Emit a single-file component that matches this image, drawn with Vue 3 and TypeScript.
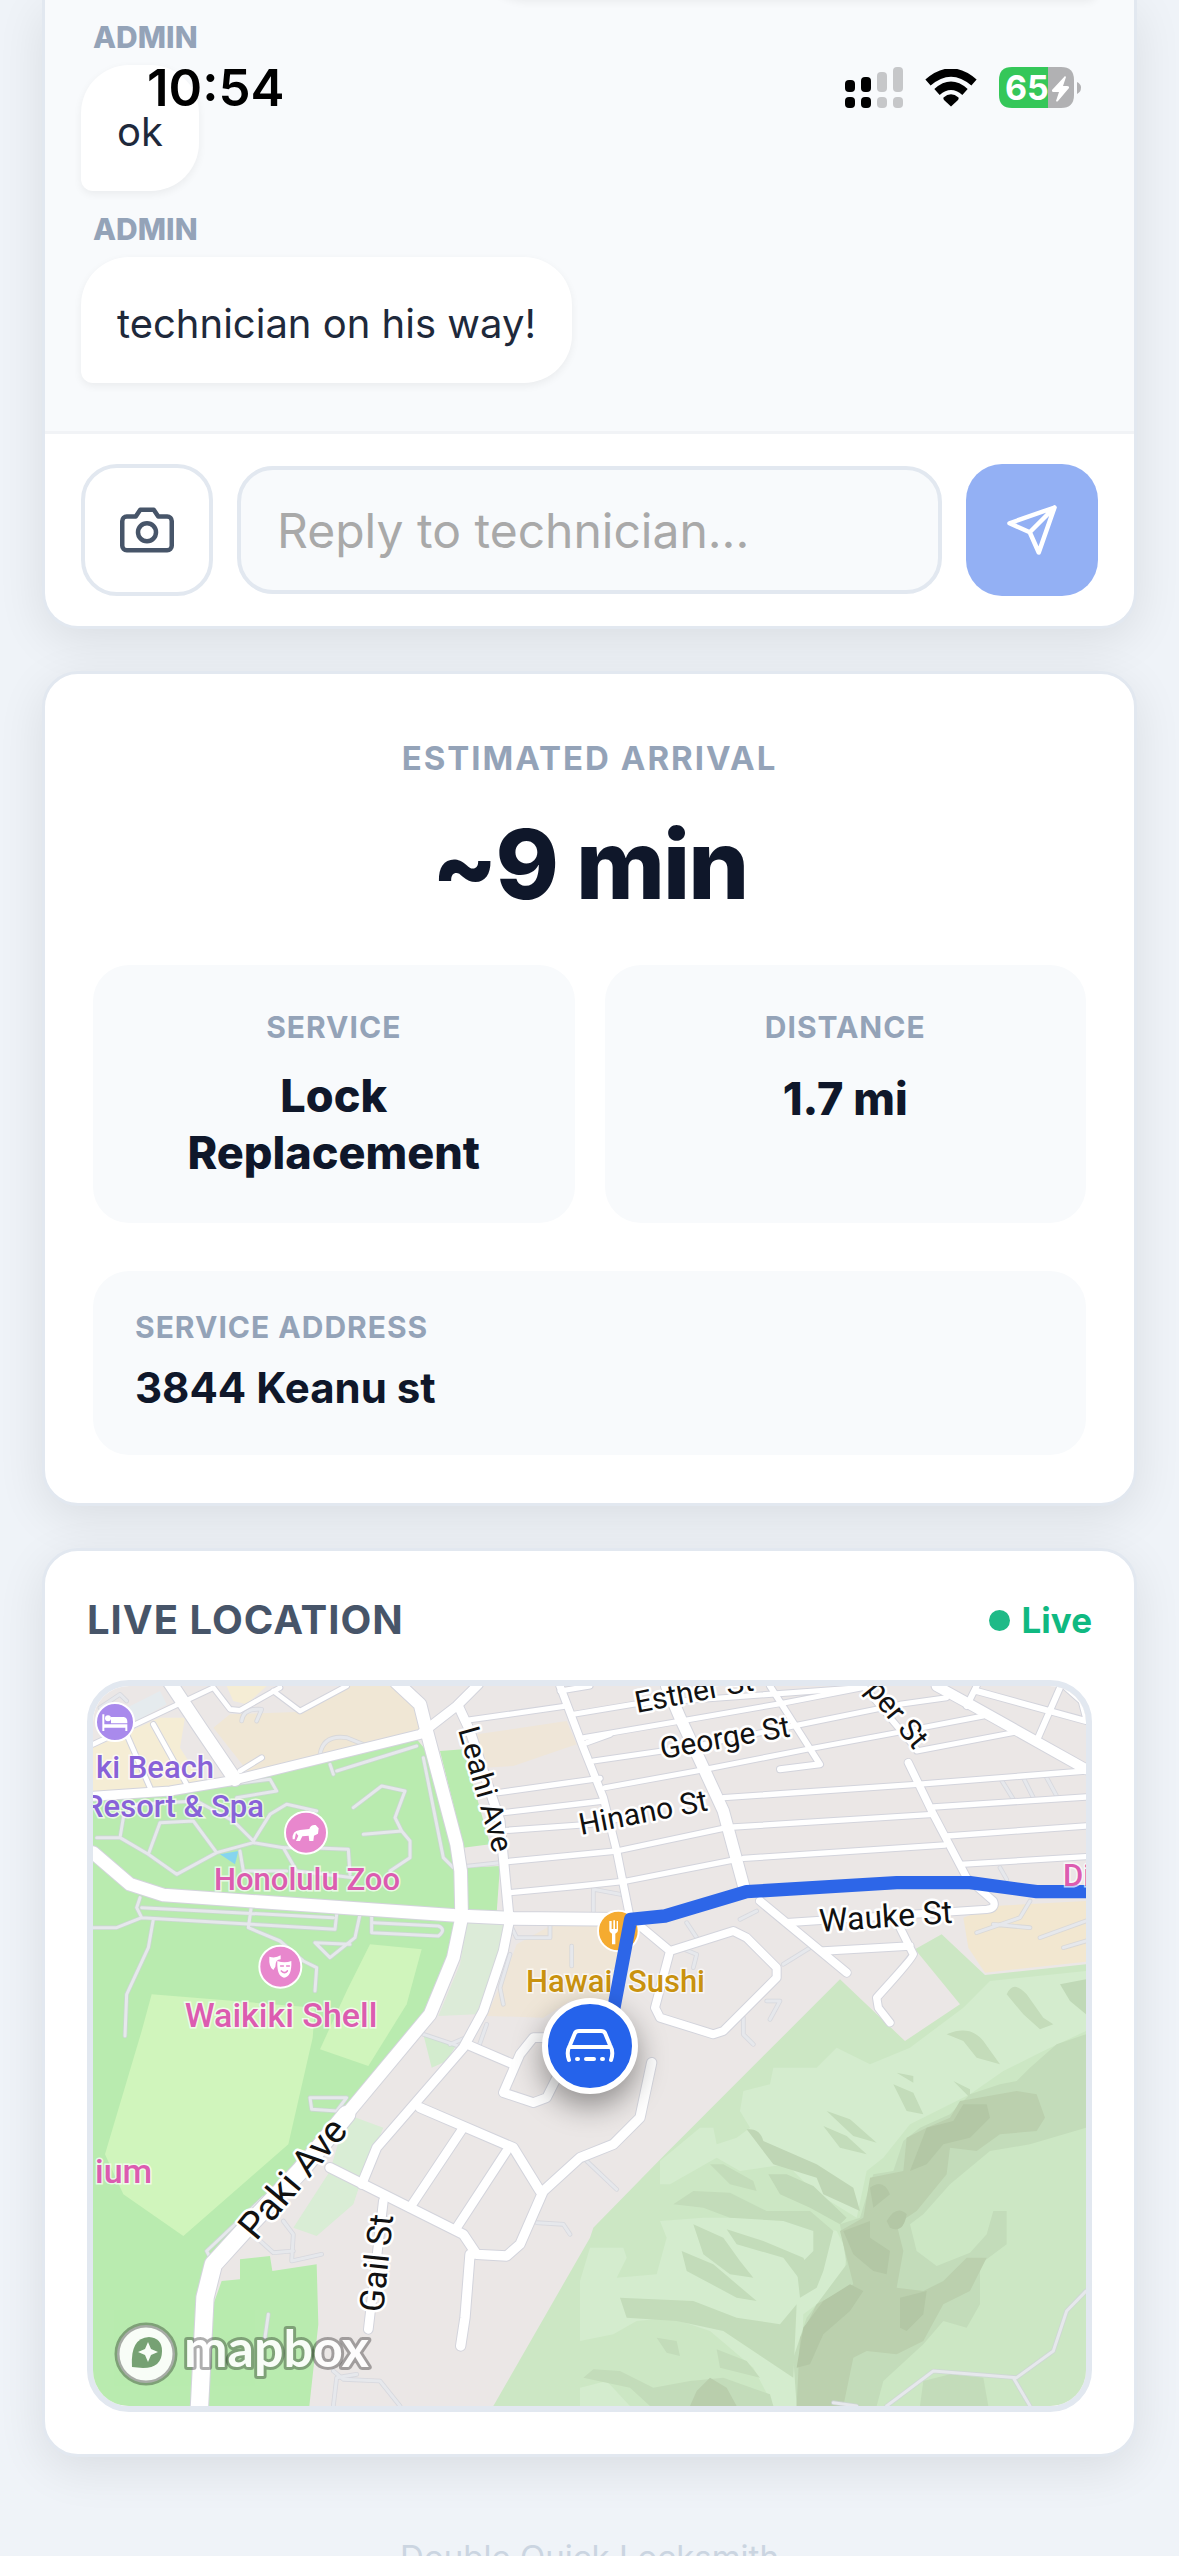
<script setup lang="ts">
import { ref } from 'vue'

interface Message { id: number; author: string; text: string }
interface Road { d: string; w: number }
interface Shape { d: string; fill: string }
interface Label { text: string; x: number; y: number; angle: number; size: number }

const reply = ref('')

const messages: Message[] = [
  { id: 1, author: 'Admin', text: 'ok' },
  { id: 2, author: 'Admin', text: 'technician on his way!' },
]

const areas: Shape[] = [
  // park west of Paki Ave
  { d: 'M69 385 300 370 600 310 1040 205 1070 240 1160 560 1175 740 1130 900 1080 1020 830 1330 690 1500 420 1770 390 1900 380 2205H69z', fill: '#b9ebaf' },
  { d: 'M455 1830 510 1825V1765L600 1755 607 1800 740 1780 745 1960 718 2205H400L430 1900z', fill: '#b9ebaf' },
  { d: 'M1110 240 1180 235 1260 520 1180 530 1150 400z', fill: '#b9ebaf' },
  { d: 'M1190 590 1290 585 1280 725 1190 720z', fill: '#b9ebaf' },
  { d: 'M1190 755 1315 755 1220 1030 1105 1035 1170 880z', fill: '#dcebd8' },
  { d: 'M1060 1090 1160 1120 1130 1170 1085 1190z', fill: '#d3ecce' },
  { d: 'M830 1330 940 1370 880 1510 850 1600 740 1695 670 1670 780 1500z', fill: '#d9edd5' },
  { d: 'M245 970 735 1010 728 1100 655 1420 340 1695 160 1570 105 1450 215 1080z', fill: '#d0f5bc' },
  { d: 'M900 820 1055 835 1010 1000 895 1185 750 1135 830 960z', fill: '#d0f5bc' },
  // commercial blocks
  { d: 'M480 130 700 122 830 45H960L1040 110 1050 180 540 310 430 170z', fill: '#f0e7d5' },
  { d: 'M69 230 270 140H345L330 230 400 340 69 362z', fill: '#f5edd5' },
  { d: 'M470 45H590L530 100 490 90z', fill: '#f5edd5' },
  { d: 'M170 110 270 60 290 100 200 150z', fill: '#e5ebee' },
  { d: 'M1220 190 1490 150 1520 220 1330 285 1245 290z', fill: '#efe6d8' },
  { d: 'M1340 820 1450 760 1680 770 1640 1000 1500 990 1420 1040 1250 1035 1310 900z', fill: '#efe6d8' },
  { d: 'M2680 740 2770 705 3048 690V872L2745 905 2695 830z', fill: '#f2e7d0' },
  { d: 'M450 550 505 540 495 580z', fill: '#86d5ef' },
  // Diamond Head slopes
  { d: 'M1270 2205 1560 1700 1570 1670 1790 1445 2155 1080 2310 925 2505 1110 2670 1000 2535 835 2615 790 2745 912 3048 880V2205z', fill: '#cce7c4' },
]

const relief: Shape[] = [
  { d: 'M2110 1190 2240 1190 2300 1130 2400 1180 2520 1130 2680 1010 2760 930 3048 900V1080L2920 1140 2800 1200 2700 1270 2600 1320 2520 1360 2440 1460 2390 1500 2360 1640 2230 1560 2150 1480 2010 1500 1940 1460 1800 1540 1770 1540 1770 1470 1890 1370 1930 1370 1940 1420 2000 1400 2040 1370 2010 1320 2020 1260 2100 1240z', fill: '#d4ecce' },
  { d: 'M1560 1730H1660L1670 1760 1640 1820 1760 1810 1790 1700 1770 1650 1900 1640 2100 1640 2220 1660 2300 1680 2330 1740 2320 1840 2200 1930 2190 2205H2110L2050 2090 1920 1980 1800 1940 1700 1950 1630 1990 1530 2010V1830z', fill: '#d4ecce' },
  { d: 'M1530 2150 1610 2130 1680 2205H1530z', fill: '#d4ecce' },
  { d: 'M2630 1090Q2700 1060 2740 1110L2790 1180 2720 1160 2680 1110z', fill: '#c4dcba' },
  { d: 'M2810 970Q2830 925 2870 970L2920 1040 2950 1060 2910 1075 2860 1030z', fill: '#c4dcba' },
  { d: 'M2970 940 3048 925V1030L3000 990z', fill: '#c0d9b7' },
  { d: 'M3048 1090 2960 1120 2880 1190 2840 1230 2790 1240 2700 1270 2640 1330 2550 1370 2500 1410 2470 1500 2410 1510 2370 1640 2310 1660 2330 1780 2210 1940 2170 2060 2180 2205H2420L2440 2130 2560 2020 2620 1950 2690 1970 2730 1900 2730 1780 2810 1720 2810 1620H2770L2750 1690 2700 1745 2600 1785 2540 1740 2520 1660 2560 1630 2640 1540 2760 1440 2880 1420 3048 1370z', fill: '#c3dcba' },
  { d: 'M2670 1290 2840 1260 2900 1270 2925 1340 2900 1380 2790 1390 2720 1440 2640 1430 2630 1510 2540 1620 2480 1660 2500 1740 2480 1850 2560 1860 2620 1830 2690 1760 2750 1760 2700 1860 2620 1900 2560 2010 2480 2050 2390 2040 2350 2060 2320 2205H2180L2190 2000 2240 1900 2350 1840 2310 1680 2380 1640 2400 1520 2500 1500 2510 1400 2570 1370 2640 1340z', fill: '#bbd0ae' },
  { d: 'M2680 1300 2750 1300 2760 1340 2700 1400 2620 1420 2570 1480 2520 1500 2570 1370 2650 1350z', fill: '#b3c7a5' },
  { d: 'M2320 1680 2400 1650 2400 1700 2460 1740 2450 1810 2410 1800 2350 1750z', fill: '#b3c7a5' },
  { d: 'M2260 1890 2340 1840 2380 1860 2340 1920 2260 1990 2220 2080 2180 2090 2200 1970z', fill: '#b3c7a5' },
  { d: 'M2490 1880 2570 1860 2560 1930 2510 1980 2490 1970z', fill: '#b3c7a5' },
  { d: 'M2400 1550Q2440 1520 2460 1570L2410 1610zM2450 1650Q2480 1600 2510 1630 2500 1690 2460 1670z', fill: '#b3c7a5' },
  { d: 'M2030 1375Q2070 1370 2080 1410L2240 1480 2350 1550 2370 1620 2260 1570 2240 1520 2110 1480z', fill: '#bfd6b5' },
  { d: 'M1920 1480 1960 1480 2050 1530 2060 1560 1980 1540z', fill: '#c3dcba' },
  { d: 'M2095 1510 2150 1510 2230 1545 2330 1640 2310 1660 2220 1610 2130 1570z', fill: '#c0d9b7' },
  { d: 'M1810 1600 1870 1560 1980 1565 2090 1620 2220 1620 2290 1680 2260 1800 2240 1850 2190 1880 2180 1790 2230 1740 2230 1680 2140 1650 1980 1640 1900 1610z', fill: '#c3dcba' },
  { d: 'M1870 1660 1960 1700 2010 1770 2050 1820 1980 1810 1900 1750zM1970 1675 2080 1710 2200 1760 2230 1820 2200 1840 2140 1760 2000 1720zM1835 1740 1930 1780 2060 1890 2000 1880 1850 1800z', fill: '#c3dcba' },
  { d: 'M1650 1880 1870 1890 2000 1940 2130 1960 2180 1900 2170 2120 2080 2060 1960 1980 1820 1950 1670 1940z', fill: '#c3dcba' },
  { d: 'M2270 1320 2340 1345 2420 1415 2350 1395zM2260 1365 2330 1395 2390 1450 2310 1430zM2470 1240 2530 1265 2560 1330 2510 1320zM2480 1205 2530 1215 2530 1235zM2650 1230 2700 1255 2700 1280z', fill: '#c3dcba' },
  { d: 'M1760 2000 1820 2010 1830 2055 1790 2045zM1940 2035 2030 2070 2070 2120 1950 2090zM1540 2120 1570 2095 1650 2100 1750 2150 1860 2130 1960 2120 2100 2170 2110 2205H1740L1680 2150z', fill: '#c3dcba' },
  { d: 'M1880 2160 1920 2120 1970 2150 2000 2205H1860z', fill: '#b9ceac' },
  { d: 'M2560 2130 2640 2110 2740 2120 2755 2205H2550z', fill: '#c3dcba' },
]

const paths: string[] = [
  'M80 500H150L235 550 320 610 440 545 370 450 270 455 235 550M150 500 160 440 200 400 380 390 490 450 550 510 600 430 650 400 740 420M440 545 550 515 640 530 720 530 835 535 840 610M640 530 680 600 850 620M510 540 520 600 650 600',
  'M850 410 935 345 1005 360 990 400 975 440 995 480 1020 510 1020 560 960 600M880 490 995 480M800 300 1040 225M790 310 780 280M480 340 600 325 620 360 500 380M1060 260 1120 560 1150 590 1290 575',
  'M210 680 200 710 215 740 795 775 800 730M215 710 790 740M250 745 235 830 170 970 165 1095M69 770 140 770 215 740M545 700 535 770 630 810 700 870 740 890 735 960M870 730 855 800 780 860 735 815 840 820M905 735V785L1105 795Q1130 775 1105 765L910 755',
  'M720 1280H830L800 1320 725 1315zM580 1580 410 1740 420 1760M640 1650 670 1690 665 1770 755 1750M560 1700 610 1745 670 1740M595 1930 585 2000M1060 1090 1180 1130M1140 1120 1210 1090',
  'M90 110 150 70 170 90M750 250Q760 190 830 200L880 220M515 150Q520 110 575 115L560 150M1325 770 1340 800H1440V760M1320 850 1290 950 1300 1000M1505 825V885M1250 1060 1225 1130M1570 650V730M1570 655 1650 670',
  'M2010 745 2060 720M1850 755 1880 800M1830 830 1880 850 1870 890M2140 880 2220 830M2090 990 2130 990 2100 1045M2020 1040 2020 1090 2050 1120M2790 590 2810 625M2790 320 2830 385M2860 320 2890 380M2930 320 2960 375M2720 785 2850 740 2880 690M2910 800 3048 750M2980 830 3048 810M2770 760 2880 770',
  'M1400 1655 1480 1660 1500 1690M1550 1470 1640 1555M2450 2205 2590 2100 2840 2120 2950 2040 2990 1920 3048 1860M2830 2120 2880 2205M2290 2195 2360 2205',
  'M860 2110 800 2120 790 2205M790 2100 820 2125 930 2130 990 2205',
]

const roads: Road[] = [
  { d: 'M120 45 69 75M69 220 430 50M170 190 240 350M250 160 350 340M430 50 480 115 510 118 630 50M610 60 690 120 830 45M510 300 575 260', w: 14 },
  { d: 'M1190 148 1490 105M1470 60 1560 45M1510 130 1690 100 2370 50M1540 200 1820 152 2130 98 2380 50M1570 270 1880 225 2170 165 2490 100 2630 80M1605 350 1880 300 2210 235 2480 185 2740 135M2540 240 2830 185', w: 15 },
  { d: 'M1550 215 1620 190M1285 365 1590 322M1300 425 1600 390M1310 478 1560 460 1640 445M1310 572 1640 540 1970 470M1320 665 1530 645 1670 630 2000 565', w: 16 },
  { d: 'M1960 380 2540 340 3048 300M1990 468 2590 430M2590 408 3048 378M2020 562 2625 522M2630 495 3048 465M2670 580 3048 557', w: 16 },
  { d: 'M2100 45 2250 280 2130 295M2380 45 2540 235M2720 45 2690 105M2720 60 3048 150M2970 50 2900 210M2990 50 3035 90 3048 140', w: 18 },
  { d: 'M1470 45 1540 230 1600 380 1640 540 1680 740M2515 275 2590 430 2690 620 2770 690Q2780 712 2750 715L2150 755M2260 840 2520 825M2490 770 2530 850Q2530 860 2420 980L2425 1010 2460 1055', w: 22 },
  { d: 'M1710 765 1800 840 1990 780 2030 800 2120 890 2120 920 1960 1080 1930 1090 1770 1040 1755 1010 1800 840M2070 690 2330 905', w: 24 },
  { d: 'M1190 1120 1330 1180M1530 1100H1390L1350 1150 1300 1265 1390 1295 1430 1280 1460 1220M1180 1370 1020 1610M1310 1440 1160 1670M940 1590 895 1975', w: 26 },
  { d: 'M780 1490 1180 1690 1220 1750 1310 1755 1350 1720 1420 1560 1530 1460 1630 1420 1710 1340 1745 1175M1050 1310 1330 1430 1410 1560M1200 1750 1185 1940 1172 2025', w: 28 },
  { d: 'M1165 105 1200 180 1290 450 1300 560 1318 750 1300 840 1240 1020 1180 1130 920 1430 875 1540', w: 27 },
  { d: 'M2600 45 2700 100 3048 295', w: 30 },
  { d: 'M69 376 300 360 480 330 1050 190 1160 105 1225 40', w: 27 },
  { d: 'M1790 45 1830 140 1900 290 1960 420 2025 660', w: 34 },
  { d: 'M300 35 390 170 495 325', w: 40 },
  { d: 'M69 545 180 640 280 672 1180 735 1330 742 1660 745', w: 38 },
  { d: 'M980 35 1050 100 1070 180 1160 520 1172 600 1175 740 1150 860 1080 1030 830 1330 690 1500', w: 38 },
  { d: 'M830 1330 690 1500 530 1670 430 1780 405 1880 388 2215', w: 52 },
]

const streets: Label[] = [
  { text: 'Esther St', x: 544, y: 27, angle: -11, size: 30 },
  { text: 'George St', x: 569, y: 73, angle: -10, size: 30 },
  { text: 'Hinano St', x: 488, y: 149, angle: -11, size: 30 },
  { text: 'Wauke St', x: 727, y: 246, angle: -4, size: 32 },
  { text: 'Leahi Ave', x: 365, y: 44, angle: 74, size: 30 },
  { text: 'Paki Ave', x: 163, y: 556, angle: -50, size: 38 },
  { text: 'Gail St', x: 290, y: 627, angle: -84, size: 34 },
  { text: 'per St', x: 772, y: 4, angle: 51, size: 30 },
]
</script>

<template>
  <div class="page">
    <header class="status">
      <time class="clock">10:54</time>
      <div class="indicators">
        <svg width="58" height="42" viewBox="0 0 58 42" aria-label="Signal">
          <g fill="#000"><rect y="13" width="10" height="12" rx="4" /><rect x="16" y="10" width="10" height="15" rx="4" /><rect y="30" width="10" height="11" rx="4" /><rect x="16" y="30" width="10" height="11" rx="4" /></g>
          <g fill="#c6c7c9"><rect x="32" y="5" width="10" height="20" rx="4" /><rect x="48" width="10" height="25" rx="4" /><rect x="32" y="30" width="10" height="11" rx="4" /><rect x="48" y="30" width="10" height="11" rx="4" /></g>
        </svg>
        <svg class="wifi" width="52" height="38" viewBox="0 0 52 38" aria-label="Wi-Fi">
          <g fill="none" stroke="#000" stroke-width="8"><path d="M3 13.500Q26-6.500 49 13.500" /><path d="M12 23Q26 10.500 40 23" /></g>
          <path d="M18.500 28.500Q26 22 33.500 28.500 34 29.500 33 31L26 37.500 19 31Q18 29.500 18.500 28.500z" />
        </svg>
        <svg width="82" height="42" viewBox="0 0 82 42" aria-label="Battery">
          <path d="M13 0H49V41H13Q0 41 0 28V13Q0 0 13 0z" fill="#35c759" />
          <path d="M49 0H62Q75 0 75 13V28Q75 41 62 41H49z" fill="#b1b1b3" />
          <path d="M78 15Q82 17 82 20.500 82 25 78 27z" fill="#b1b1b3" />
          <path d="M66 9 53 23Q52.500 25 55 25H60L57 34Q58 35 59 34L70 21Q70.500 19 68 19H64L67 10z" fill="#fff" />
          <text x="6" y="33" font-size="34" font-weight="700" fill="#fff">65</text>
        </svg>
      </div>
    </header>

    <main class="stack">
      <section class="card chat">
        <div class="messages">
          <div class="bubble own" aria-hidden="true"></div>
          <article v-for="m in messages" :key="m.id" class="message">
            <span class="author">{{ m.author }}</span>
            <p class="bubble">{{ m.text }}</p>
          </article>
        </div>
        <form class="composer" @submit.prevent>
          <button type="button" class="square attach" aria-label="Add photo">
            <svg width="54" height="54" viewBox="0 0 24 24" fill="none" stroke="currentColor" stroke-width="2" stroke-linecap="round" stroke-linejoin="round"><path d="M23 19a2 2 0 0 1-2 2H3a2 2 0 0 1-2-2V8a2 2 0 0 1 2-2h4l2-3h6l2 3h4a2 2 0 0 1 2 2z" /><circle cx="12" cy="13" r="4" /></svg>
          </button>
          <input v-model="reply" class="field" type="text" placeholder="Reply to technician..." aria-label="Reply to technician" />
          <button type="submit" class="square send" aria-label="Send">
            <svg width="54" height="54" viewBox="0 0 24 24" fill="none" stroke="currentColor" stroke-width="2" stroke-linecap="round" stroke-linejoin="round"><path d="M22 2 11 13M22 2l-7 20-4-9-9-4z" /></svg>
          </button>
        </form>
      </section>

      <section class="card eta">
        <h2 class="eyebrow">Estimated arrival</h2>
        <p class="minutes">~9 min</p>
        <div class="stats">
          <div class="stat">
            <span class="caption">Service</span>
            <strong class="value">Lock<br />Replacement</strong>
          </div>
          <div class="stat">
            <span class="caption">Distance</span>
            <strong class="value single">1.7 mi</strong>
          </div>
        </div>
        <div class="address">
          <span class="caption">Service address</span>
          <strong class="street">3844 Keanu st</strong>
        </div>
      </section>

      <section class="card location">
        <div class="location-head">
          <h2 class="title">Live location</h2>
          <span class="live"><i class="dot"></i>Live</span>
        </div>
        <div class="map">
          <svg class="canvas" viewBox="0 0 993 720" preserveAspectRatio="xMidYMid slice" role="img" aria-label="Map">
            <rect width="993" height="720" fill="#ebe7e6" />
            <g transform="translate(-23 -15) scale(0.33333)" stroke-linejoin="round" stroke-linecap="round">
              <path v-for="(a, i) in areas" :key="'a' + i" :d="a.d" :fill="a.fill" />
              <path v-for="(a, i) in relief" :key="'h' + i" :d="a.d" :fill="a.fill" />
              <g fill="none">
                <path v-for="(p, i) in paths" :key="'pc' + i" :d="p" stroke="#cfd2da" stroke-opacity="0.7" stroke-width="14" />
                <path v-for="(p, i) in paths" :key="'p' + i" :d="p" stroke="#e6e8ec" stroke-width="9" />
                <path v-for="(r, i) in roads" :key="'c' + i" :d="r.d" stroke="#d3d4dc" :stroke-width="r.w + 6" />
                <path v-for="(r, i) in roads" :key="'r' + i" :d="r.d" stroke="#fff" :stroke-width="r.w" />
              </g>
              <g stroke="#fff" stroke-width="6">
                <circle cx="135" cy="153" r="57" fill="#a98aec" />
                <circle cx="708" cy="485" r="63" fill="#e887cd" />
                <circle cx="631" cy="887" r="63" fill="#e887cd" />
                <circle cx="1645" cy="780" r="61" fill="#f5ab30" />
              </g>
              <g fill="#fff">
                <path d="M97 130h6v30h69v20h-6v-10h-63v10h-6zM123 138h38q11 2 11 14v5h-49z" />
                <circle cx="114" cy="142" r="9" />
                <path d="M668 505Q665 480 690 477L718 474Q722 460 737 462L746 472 744 488 732 494 730 510H718L716 494 697 496 690 510H678L685 494 678 486 674 505z" />
                <path d="M598 857q18 6 34-4v12q-16 0-16 22l-6 10q-14-8-12-40z" />
                <path d="M622 870q22 8 42 0 2 48-22 50-22-4-20-50z" />
                <path d="M1618 750v28q0 8 8 10v32h10v-32q8-2 8-10v-28h-4v24h-5v-26h-5v26h-5v-24z" />
              </g>
              <path d="M632 885h8m10 0h8M634 900q10 10 18 0" stroke="#e887cd" stroke-width="5" fill="none" />
            </g>
            <g class="poi">
              <g fill="#8862d8">
                <text x="3" y="92">ki Beach</text>
                <text x="171" y="131" text-anchor="end">Resort &amp; Spa</text>
              </g>
              <g fill="#dc5cb0">
                <text x="214" y="204" text-anchor="middle">Honolulu Zoo</text>
                <text class="large" x="188" y="341" text-anchor="middle">Waikiki Shell</text>
                <text class="large" x="2" y="497">ium</text>
              </g>
              <text x="433" y="306" fill="#c9920f">Hawaii Sushi</text>
            </g>
            <path d="M1610 1125 1682 745 1785 735 2030 662 2480 635 2700 635 2900 662H3060" transform="translate(-23 -15) scale(0.33333)" fill="none" stroke="#2d66e8" stroke-width="40" stroke-linejoin="round" />
            <g class="poi"><text x="970" y="200" fill="#dc5cb0">Di</text></g>
            <g class="road-names">
              <text v-for="s in streets" :key="s.text" :font-size="s.size" :transform="`translate(${s.x} ${s.y}) rotate(${s.angle})`">{{ s.text }}</text>
            </g>
            <g opacity="0.9">
              <circle cx="53" cy="668" r="29" fill="#fff" stroke="#000" stroke-opacity="0.35" stroke-width="5" />
              <path d="M39 681Q37 652 56 651 69 652 69 665 69 682 50 682z" fill="#6f9a6d" />
              <path d="M55 656l3 7 7 3-7 3-3 7-3-7-7-3 7-3z" fill="#fff" />
              <text class="brand" x="91" y="681">mapbox</text>
            </g>
          </svg>
          <div class="marker" aria-label="Technician">
            <svg width="54" height="54" viewBox="0 0 54 54" fill="none" stroke="#fff" stroke-width="4" stroke-linecap="round" stroke-linejoin="round">
              <path d="M6 41Q3 33 7 26L12 14Q13 12 16 12H38Q41 12 42 14L47 26Q51 33 48 41" /><path d="M7 28H47" /><path d="M23 40H31M14 40H15M39 40H40" />
            </svg>
          </div>
        </div>
      </section>
    </main>

    <footer class="footer">Double Quick Locksmith</footer>
  </div>
</template>

<style>
html,
body {
  margin: 0;
  background: #eff3f8;
}
</style>

<style scoped>
.page {
  position: relative;
  overflow: hidden;
  height: 100vh;
  box-sizing: border-box;
  padding: 0 42px;
  background: #eff3f8;
  color: #0f172a;
  font-family: Inter, "Liberation Sans", sans-serif;
}

.status {
  position: absolute;
  z-index: 2;
  top: 67px;
  left: 0;
  right: 0;
  display: flex;
  justify-content: space-between;
  align-items: center;
  height: 42px;
  padding: 0 98px 0 147px;
  color: #000;
}

.clock {
  font-size: 51px;
  font-weight: 600;
  line-height: 42px;
}

.indicators {
  display: flex;
  align-items: center;
  gap: 22px;
}

.stack {
  display: flex;
  flex-direction: column;
  gap: 42px;
}

.card {
  border: 3px solid #e2e8f0;
  border-radius: 36px;
  background: #fff;
  box-shadow: 0 12px 48px rgba(0, 0, 0, 0.09);
}

.chat {
  border-top: 0;
  border-radius: 0 0 36px 36px;
}

.messages {
  display: flex;
  flex-direction: column;
  align-items: flex-start;
  gap: 18px;
  padding: 0 36px 48px;
  border-bottom: 3px solid #f1f3f6;
  background: #f8fafc;
}

.message {
  display: flex;
  flex-direction: column;
  align-items: flex-start;
  gap: 8px;
}

.author {
  padding-left: 12px;
  color: #94a3b8;
  font-size: 30px;
  font-weight: 800;
  line-height: 40px;
  text-transform: uppercase;
}

.bubble {
  margin: 0;
  padding: 35px 36px 28px;
  border-radius: 48px 48px 48px 12px;
  background: #fff;
  box-shadow: 0 3px 9px rgba(0, 0, 0, 0.06);
  color: #1e293b;
  font-size: 40px;
  line-height: 63px;
}

.own {
  align-self: flex-end;
  box-sizing: border-box;
  width: 620px;
  height: 126px;
  margin-top: -127px;
  border-radius: 48px 48px 12px 48px;
}

.composer {
  display: flex;
  align-items: center;
  gap: 24px;
  padding: 30px 36px;
}

.square {
  display: flex;
  flex: none;
  align-items: center;
  justify-content: center;
  width: 132px;
  height: 132px;
  padding: 0;
  border-radius: 36px;
}

.attach {
  border: 4px solid #e2e8f0;
  background: #fff;
  color: #475569;
}

.send {
  border: 0;
  background: #93b0f4;
  color: #fff;
}

.field {
  flex: 1;
  min-width: 0;
  box-sizing: border-box;
  height: 128px;
  padding: 0 36px;
  border: 4px solid #e2e8f0;
  border-radius: 36px;
  background: #f8fafc;
  color: #0f172a;
  font: 400 48px Inter, "Liberation Sans", sans-serif;
}

.field::placeholder {
  color: #a9a9a9;
  opacity: 1;
}

.eta {
  padding: 64px 48px 48px;
  text-align: center;
}

.eyebrow {
  margin: 0;
  color: #94a3b8;
  font-size: 33px;
  font-weight: 700;
  line-height: 40px;
  letter-spacing: 2px;
  text-transform: uppercase;
}

.minutes {
  margin: 38px 0 53px;
  font-size: 96px;
  font-weight: 800;
  line-height: 96px;
  letter-spacing: -2px;
}

.stats {
  display: grid;
  grid-template-columns: 1fr 1fr;
  gap: 30px;
}

.stat {
  display: flex;
  flex-direction: column;
  gap: 22px;
  padding: 44px 36px 42px;
  border-radius: 36px;
  background: #f8fafc;
}

.caption {
  color: #94a3b8;
  font-size: 30px;
  font-weight: 700;
  line-height: 36px;
  letter-spacing: 1px;
  text-transform: uppercase;
}

.value {
  font-size: 45px;
  font-weight: 800;
  line-height: 57px;
}

.single {
  line-height: 63px;
}

.address {
  display: flex;
  flex-direction: column;
  gap: 16px;
  margin-top: 48px;
  padding: 38px 42px 40px;
  border-radius: 36px;
  background: #f8fafc;
  text-align: left;
}

.street {
  font-size: 42px;
  font-weight: 700;
  line-height: 54px;
}

.location {
  padding: 45px 42px 42px;
}

.location-head {
  display: flex;
  align-items: center;
  justify-content: space-between;
  margin-bottom: 36px;
}

.title {
  margin: 0;
  color: #475569;
  font-size: 40px;
  font-weight: 700;
  line-height: 48px;
  letter-spacing: 1px;
  text-transform: uppercase;
}

.live {
  display: flex;
  align-items: center;
  gap: 12px;
  color: #10b981;
  font-size: 35px;
  font-weight: 700;
  line-height: 48px;
}

.dot {
  width: 21px;
  height: 21px;
  border-radius: 50%;
  background: #1fba87;
}

.map {
  position: relative;
  overflow: hidden;
  border: 6px solid #e2e8f0;
  border-radius: 42px;
}

.canvas {
  display: block;
  width: 100%;
  height: 720px;
  font-family: Roboto, "Noto Sans", sans-serif;
}

.poi text {
  font-size: 31px;
  font-weight: 500;
  stroke: rgba(255, 255, 255, 0.7);
  stroke-width: 3px;
  paint-order: stroke;
}

.poi .large {
  font-size: 34px;
}

.road-names text {
  fill: #111;
  stroke: #fff;
  stroke-width: 5px;
  stroke-linejoin: round;
  paint-order: stroke;
}

.brand {
  fill: #fff;
  font-family: Lato, sans-serif;
  font-size: 52px;
  font-weight: 700;
  stroke: rgba(0, 0, 0, 0.35);
  stroke-width: 6px;
  stroke-linejoin: round;
  paint-order: stroke;
}

.marker {
  position: absolute;
  top: 50%;
  left: 50%;
  display: flex;
  align-items: center;
  justify-content: center;
  width: 84px;
  height: 84px;
  border: 6px solid #fff;
  border-radius: 50%;
  background: #2563eb;
  box-shadow: 0 12px 30px rgba(0, 0, 0, 0.4);
  transform: translate(-50%, -50%);
}

.footer {
  margin-top: 80px;
  color: #cbd5e1;
  font-size: 33px;
  line-height: 40px;
  text-align: center;
}
</style>
